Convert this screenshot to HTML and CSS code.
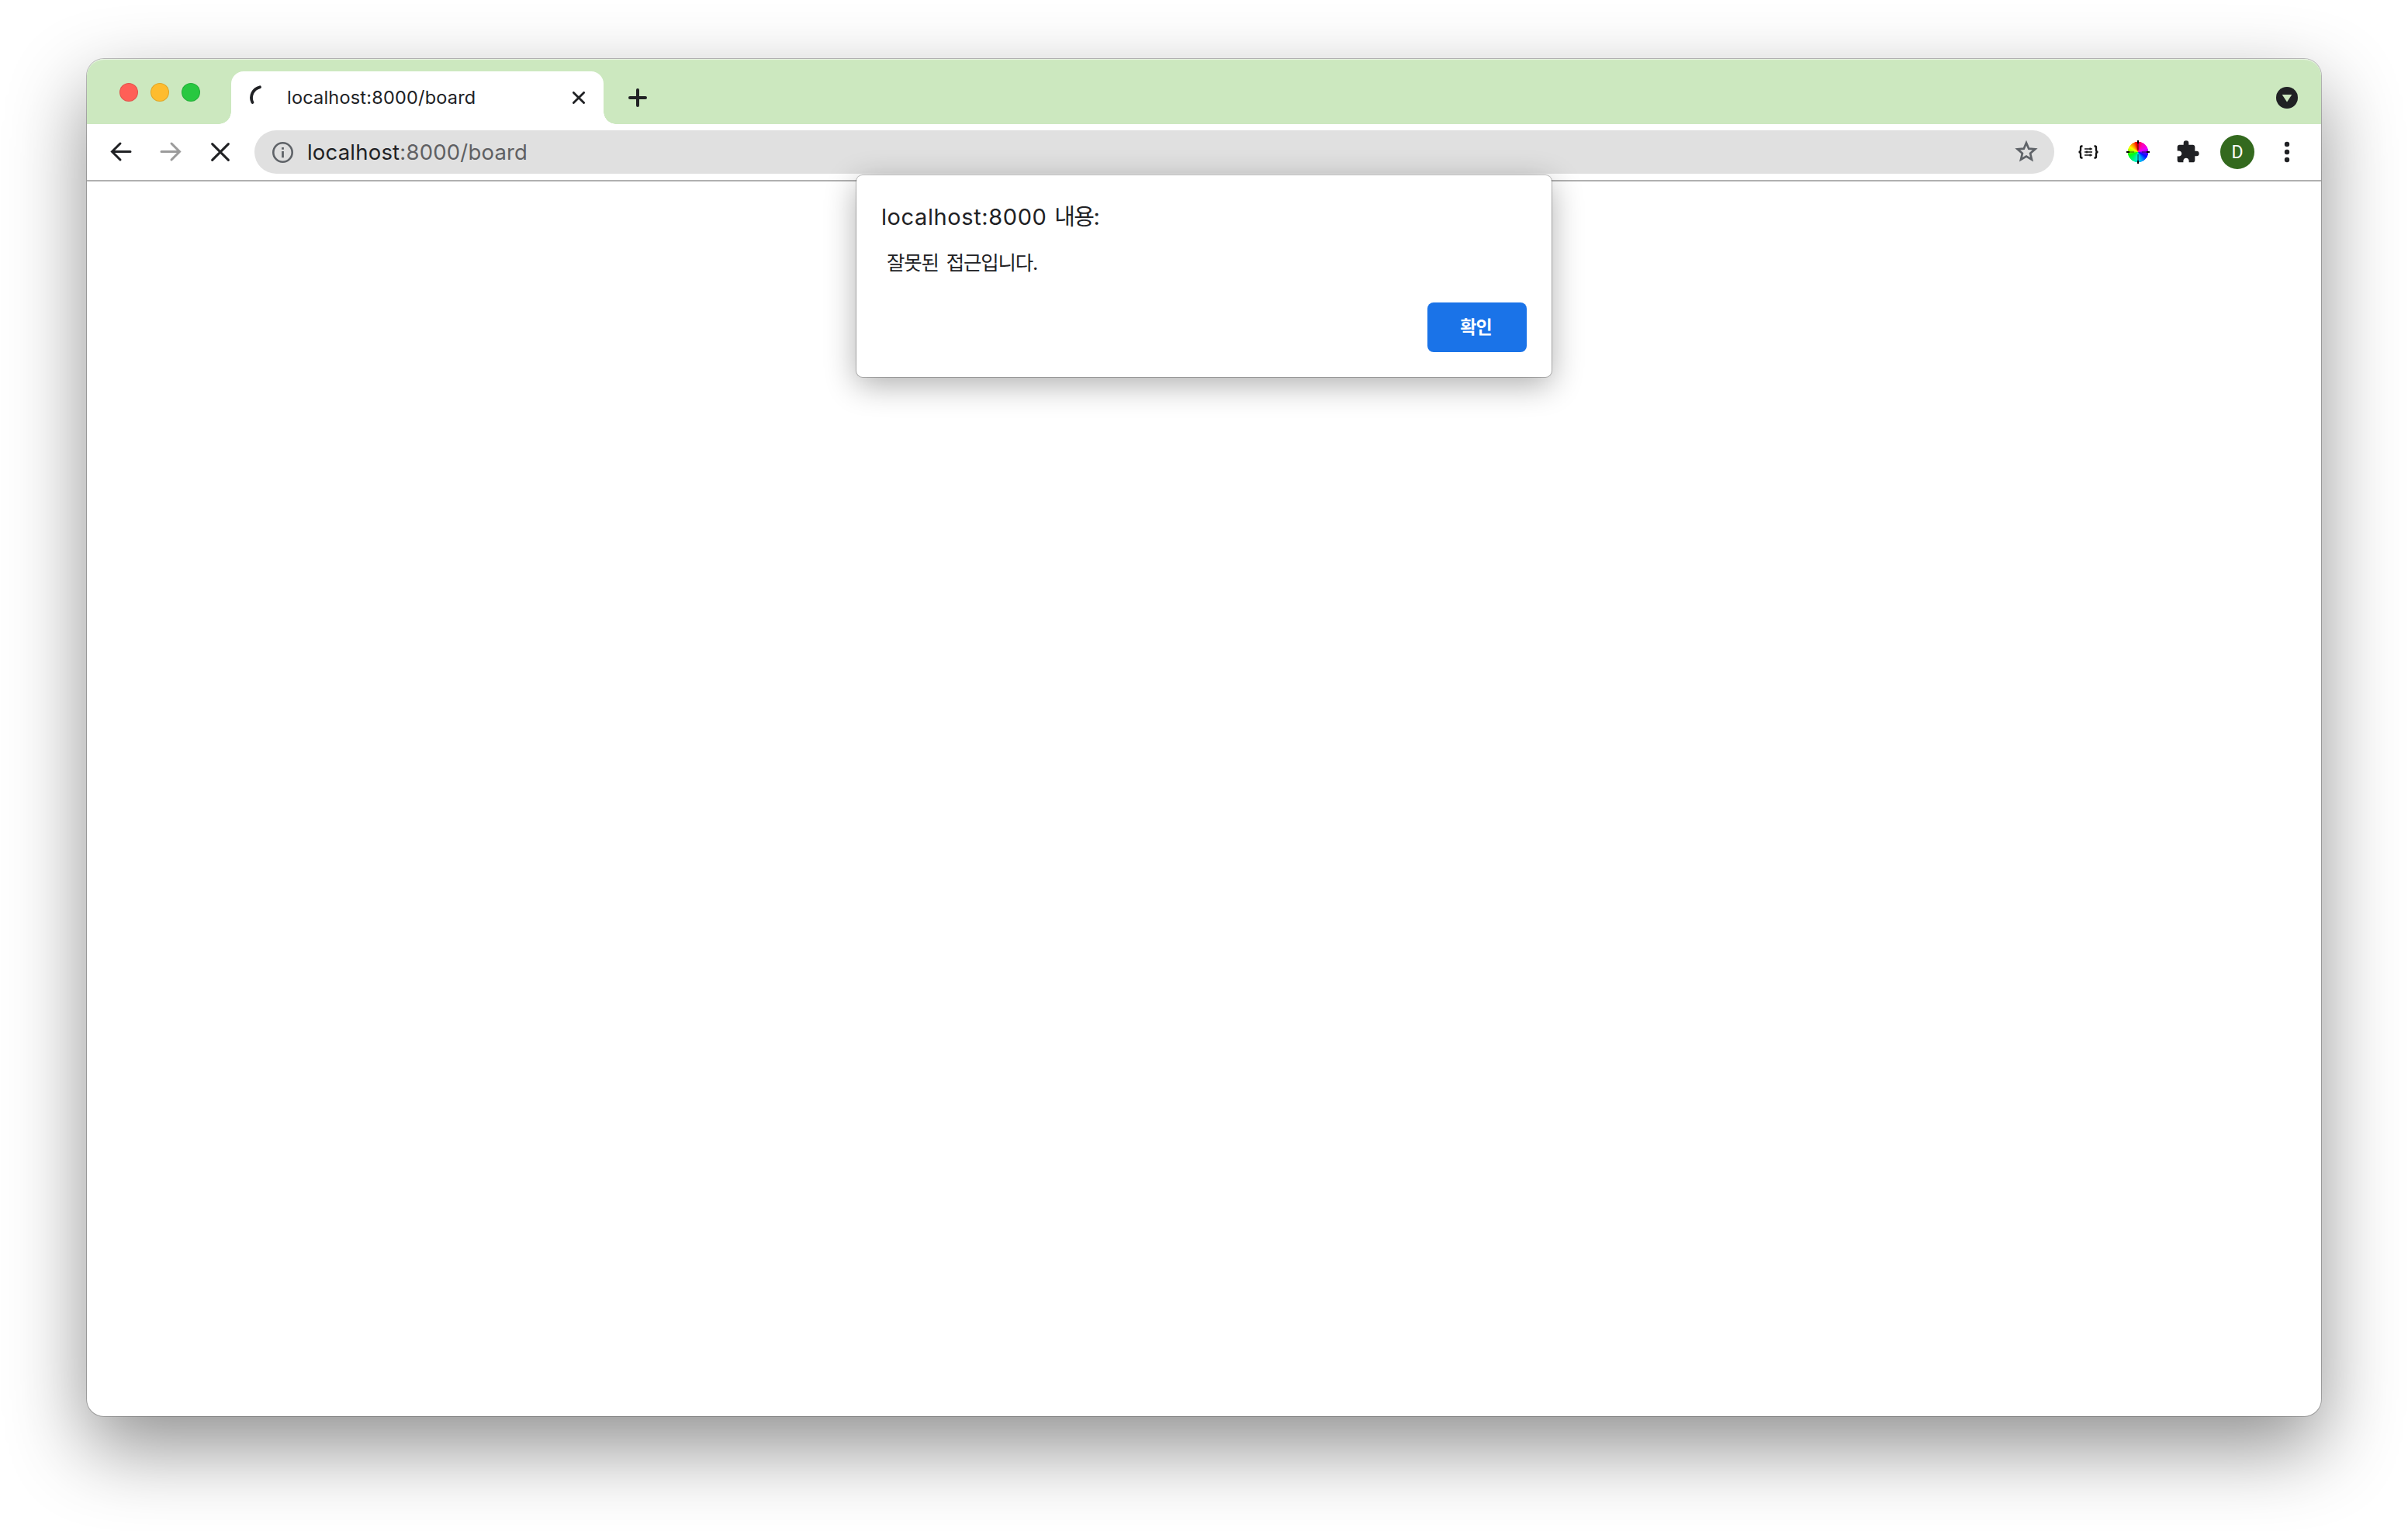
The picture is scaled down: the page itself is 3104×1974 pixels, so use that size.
FILE: index.html
```html
<!DOCTYPE html>
<html lang="ko">
<head>
<meta charset="utf-8">
<title>localhost:8000/board</title>
<link rel="stylesheet" href="styles.css">
</head>
<body>
<div class="window">
  <header class="tabstrip">
    <div class="lights"><i class="light red"></i><i class="light yellow"></i><i class="light green"></i></div>
    <div class="tab">
      <svg class="spinner" width="32" height="32" viewBox="0 0 32 32"><path d="M13 2.3A14 14 0 0 0 3.4 22" fill="none" stroke="#202124" stroke-width="3.8" stroke-linecap="round"/></svg>
      <span class="tab-title">localhost:8000/board</span>
      <svg class="tab-close" width="16" height="16" viewBox="0 0 16 16"><path d="M1.4 1.4l13.2 13.2M14.6 1.4L1.4 14.6" stroke="#202124" stroke-width="2.8" stroke-linecap="round"/></svg>
    </div>
    <svg class="new-tab" width="24" height="24" viewBox="0 0 24 24"><path d="M12 2v20M2 12h20" stroke="#202124" stroke-width="4" stroke-linecap="round"/></svg>
    <svg class="tab-search" width="28" height="28" viewBox="0 0 28 28"><circle cx="14" cy="14" r="14" fill="#202124"/><path d="M7.7 10h12.6L14 19.6z" fill="#cce8bf"/></svg>
  </header>
  <nav class="toolbar">
    <div class="nav-buttons">
      <svg width="28" height="28" viewBox="0 0 28 28"><path d="M26 13.500H3M13 3L2.500 13.500 13 24" fill="none" stroke="#202124" stroke-width="3" stroke-linecap="round" stroke-linejoin="miter"/></svg>
      <svg width="28" height="28" viewBox="0 0 28 28"><path d="M2 13.500h23M15 3l10.500 10.500L15 24" fill="none" stroke="#9b9b9b" stroke-width="3" stroke-linecap="round" stroke-linejoin="miter"/></svg>
      <svg width="28" height="28" viewBox="0 0 28 28"><path d="M3.600 3.600l20.800 20.800M24.400 3.600L3.600 24.400" stroke="#202124" stroke-width="3" stroke-linecap="round"/></svg>
    </div>
    <div class="omnibox">
      <svg width="28" height="28" viewBox="0 0 28 28"><circle cx="14.500" cy="14.500" r="12.200" fill="none" stroke="#5f6368" stroke-width="2.600"/><path d="M13.100 13h2.800v8.200h-2.800zM13.100 8h2.800v2.800h-2.800z" fill="#5f6368"/></svg>
      <span class="url"><b>localhost</b>:8000/board</span>
      <svg class="star" width="30" height="30" viewBox="0 0 30 30"><path d="M15 4.200l3.200 7.500 8.100.7-6.200 5.300 1.900 8-7-4.200-7 4.200 1.900-8-6.200-5.300 8.100-.7z" fill="none" stroke="#5f6368" stroke-width="2.700"/></svg>
    </div>
    <div class="extensions">
      <svg width="28" height="20" viewBox="0 0 28 20"><path d="M6.500 2.500H5.200Q4 2.500 4 4v3.600Q4 10 1.500 10 4 10 4 12.400V16q0 1.500 1.200 1.500h1.300M21.500 2.500h1.300Q24 2.500 24 4v3.600Q24 10 26.500 10 24 10 24 12.400V16q0 1.500-1.200 1.500h-1.300" fill="none" stroke="#111" stroke-width="2.300"/><path d="M9 6h10M9 10h10M9 14h10M16.200 4.500v3M12 8.500v3M16.200 12.500v3" stroke="#111" stroke-width="1.400"/></svg>
      <div class="wheel">
        <svg width="30" height="30" viewBox="0 0 30 30"><path d="M15 3v9M15 18v9M3 15h7M20 15h7" stroke="#111" stroke-opacity=".65" stroke-width="1.200"/><path d="M15 0v4M15 26v4M0 15h4M26 15h4" stroke="#000" stroke-width="2.200"/></svg>
      </div>
      <svg class="puzzle" width="32" height="32" viewBox="0 0 24 24"><path d="M20.500 11H19V7c0-1.100-.9-2-2-2h-4V3.500a2.500 2.500 0 0 0-5 0V5H4c-1.100 0-1.990.9-1.990 2v3.800H3.500c1.490 0 2.700 1.210 2.700 2.700s-1.210 2.700-2.700 2.700H2V20c0 1.100.9 2 2 2h3.800v-1.500c0-1.490 1.210-2.700 2.700-2.700s2.700 1.210 2.700 2.700V22H17c1.100 0 2-.9 2-2v-4h1.500a2.500 2.500 0 0 0 0-5z" fill="#202124"/></svg>
      <span class="avatar">D</span>
      <svg class="menu" width="8" height="28" viewBox="0 0 8 28"><g fill="#202124"><circle cx="4" cy="4" r="3.200"/><circle cx="4" cy="14" r="3.200"/><circle cx="4" cy="24" r="3.200"/></g></svg>
    </div>
  </nav>
  <main class="page"></main>
  <section class="dialog" role="dialog">
    <h1><span class="host">localhost:8000</span> 내용:</h1>
    <p>잘못된 접근입니다.</p>
    <button>확인</button>
  </section>
</div>
</body>
</html>
```
FILE: styles.css
```css
* { box-sizing: border-box; }
body { margin: 0; height: 1974px; padding: 76px 112px 148px; background: #fff; overflow: hidden; font-family: Inter, "Noto Sans CJK KR", sans-serif; color: #202124; }
svg { display: block; flex: none; }
.window { position: relative; display: flex; flex-direction: column; height: 1750px; border-radius: 22px; background: #fff; box-shadow: 0 0 0 1px rgba(0,0,0,.24), 0 40px 100px rgba(0,0,0,.44); }
.tabstrip { display: flex; height: 84px; background: #cce8bf; border-radius: 22px 22px 0 0; box-shadow: inset 0 2px 1px -1px rgba(255,255,255,.6); }
.lights { display: flex; gap: 16px; width: 186px; padding: 31px 0 0 42px; }
.light { width: 24px; height: 24px; border-radius: 50%; border: 1px solid rgba(0,0,0,.12); }
.red { background: #ff5f57; }
.yellow { background: #febc2e; }
.green { background: #28c840; }
.tab { position: relative; display: flex; align-items: center; width: 480px; height: 68px; margin-top: 16px; padding: 0 24px; background: #fff; border-radius: 16px 16px 0 0; }
.tab::before, .tab::after { content: ""; position: absolute; bottom: 0; width: 16px; height: 16px; }
.tab::before { right: 100%; background: radial-gradient(circle at 0 0, transparent 15.5px, #fff 16px); }
.tab::after { left: 100%; background: radial-gradient(circle at 100% 0, transparent 15.5px, #fff 16px); }
.tab-title { flex: 1; margin-left: 16px; padding-bottom: 2px; font-size: 23.5px; letter-spacing: .2px; white-space: nowrap; }
.new-tab { margin: 38px 0 0 32px; }
.tab-search { margin: 36px 30px 0 auto; }
.toolbar { display: flex; align-items: center; height: 74px; padding: 0 40px 0 30px; border-bottom: 2px solid #b0b0b0; }
.nav-buttons { display: flex; gap: 36px; }
.omnibox { display: flex; align-items: center; width: 2320px; height: 56px; margin-left: 30px; padding: 0 21px 0 22px; border-radius: 28px; background: #e0e0e0; }
.url { flex: 1; margin-left: 18px; padding-bottom: 1px; font-size: 27.5px; letter-spacing: .2px; color: #5f6063; white-space: nowrap; }
.url b { font-weight: 400; color: #202124; }
.star { margin-top: -2px; }
.extensions { display: flex; align-items: center; margin-left: 30px; }
.wheel { width: 30px; height: 30px; margin-left: 35px; background: radial-gradient(circle, transparent 13px, #fff 13.5px), conic-gradient(#ff0030, #ff00b0 30deg, #e800ff 70deg, #6000ff 95deg, #0010ff 120deg, #0090ff 150deg, #00f0e0 185deg, #00f080 215deg, #00ff10 250deg, #90ff00 275deg, #ffff00 300deg, #ff8000 330deg, #ff0000 350deg); }
.puzzle { margin-left: 33px; }
.avatar { width: 44px; height: 44px; margin-left: 26px; border-radius: 50%; background: #33691e; color: #fff; font: 23px/45px Roboto, sans-serif; text-align: center; }
.menu { margin-left: 38px; }
.page { flex: 1; }
.dialog { position: absolute; top: 150px; left: 992px; display: flex; flex-direction: column; width: 896px; height: 260px; padding: 32px; border-radius: 8px; background: #fff; box-shadow: 0 0 0 1px rgba(0,0,0,.25), 0 10px 40px rgba(0,0,0,.32); }
.dialog h1 { margin: 0; font-size: 29px; line-height: 43px; font-weight: 400; letter-spacing: -1.5px; word-spacing: 3px; white-space: nowrap; }
.host { letter-spacing: .6px; }
.dialog p { margin: 20px 0 0 7px; font-size: 25.5px; line-height: 36px; letter-spacing: -1.2px; word-spacing: 4px; }
.dialog button { align-self: flex-end; width: 128px; height: 64px; margin-top: auto; padding: 0 3px 5px 0; border: 0; border-radius: 8px; background: #1a73e8; color: #fff; font: 700 23px "Noto Sans CJK KR", sans-serif; letter-spacing: -1px; }
```
